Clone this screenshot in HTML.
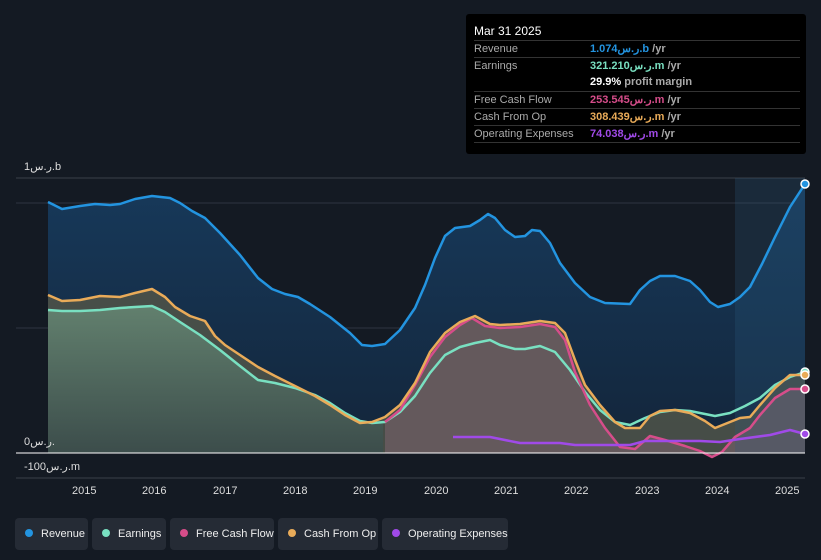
<!DOCTYPE html><html><head><style>
html,body{margin:0;width:821px;height:560px;overflow:hidden}
body{background:#141a23;font-family:"Liberation Sans","Noto Sans CJK SC",sans-serif;position:relative}
.tt{position:absolute;left:466px;top:14px;width:340px;height:140px;background:#000;border-radius:3px}
.tt .h{position:absolute;left:8px;top:10px;color:#fff;font-size:12px}
.row{position:absolute;left:8px;width:326px;border-top:1px solid #333;font-size:11px;color:#aaa;height:17px;line-height:17px;white-space:nowrap}
.row b{position:absolute;left:116px;font-weight:bold}
.ax{position:absolute;color:#ddd;font-size:11px;white-space:nowrap}
.lg{position:absolute;top:518px;height:32px;background:#252b35;border-radius:4px;color:#eee;font-size:11px;line-height:32px;white-space:nowrap;overflow:hidden}
.lg i{display:inline-block;width:8px;height:8px;border-radius:50%;margin:0 8px 0 10px}
</style></head><body>
<svg width="821" height="560" style="position:absolute;left:0;top:0">
<defs>
<linearGradient id="rv" x1="0" y1="0" x2="0" y2="1"><stop offset="0" stop-color="#17395a"/><stop offset="1" stop-color="#13253a"/></linearGradient>
<linearGradient id="er" x1="0" y1="0" x2="0" y2="1"><stop offset="0" stop-color="#62806e"/><stop offset="1" stop-color="#3c4d4b"/></linearGradient>
</defs>
<line x1="16" y1="178" x2="805" y2="178" stroke="#3a404a"/>
<line x1="16" y1="203" x2="805" y2="203" stroke="#2e3440"/>
<line x1="16" y1="328" x2="805" y2="328" stroke="#2e3440"/>
<line x1="16" y1="478" x2="805" y2="478" stroke="#3a404a"/>
<path fill="url(#rv)" d="M48,202L62,209L80,206L95,204L110,205L120,204L135,199L152,196L170,198L180,203L192,211L205,218L220,233L240,255L258,278L272,289L285,294L298,297L310,304L330,317L350,333L362,345L372,346L385,344L400,330L415,308L425,285L435,258L445,236L455,228L470,226L480,220L488,214L495,218L505,230L515,237L525,236L532,230L540,231L550,243L560,263L575,283L590,297L605,303L630,304L640,290L650,281L660,276L675,276L690,281L700,290L710,302L718,307L730,304L740,297L750,287L762,264L775,237L790,207L805,184L805,453L48,453Z"/>
<path fill="#4c5248" opacity="0.9" d="M48,295L62,301L80,300L100,296L120,297L135,293L152,289L165,297L175,307L190,316L205,321L215,336L225,345L240,355L258,367L275,376L295,386L315,396L330,405L345,415L360,423L372,422L385,417L400,405L415,383L430,352L445,333L460,322L475,316L490,324L500,325L520,324L540,321L555,323L565,333L575,360L585,385L600,405L615,422L625,428L640,428L650,416L660,411L675,410L690,413L705,421L715,428L725,424L740,418L750,417L760,405L775,388L790,375L805,375L805,453L48,453Z"/>
<path fill="url(#er)" d="M48,310L62,311L80,311L100,310L120,308L135,307L152,306L165,312L180,322L200,335L220,350L240,366L258,380L275,383L295,388L315,395L330,403L345,413L360,421L372,423L383,423L383,453L48,453Z"/>
<path fill="#6a5c60" opacity="0.85" d="M385,422L400,410L415,385L430,357L445,337L460,325L472,318L485,326L500,328L520,327L540,324L555,327L565,340L575,372L590,405L605,428L620,447L635,449L650,436L665,440L685,446L700,451L712,457L722,452L735,437L750,428L760,415L775,398L790,389L805,389L805,453L385,453Z"/>
<rect x="735" y="178" width="70" height="275" fill="#2a5a80" opacity="0.25"/>
<g fill="none" stroke-width="2.5" stroke-linejoin="round">
<path stroke="#79e0c1" d="M48,310L62,311L80,311L100,310L120,308L135,307L152,306L165,312L180,322L200,335L220,350L240,366L258,380L275,383L295,388L315,395L330,403L345,413L360,421L372,423L385,422L400,412L415,396L430,373L445,355L460,347L475,343L490,340L500,345L515,349L525,349L540,346L555,352L570,370L585,392L600,410L615,422L630,425L645,418L660,412L675,410L690,411L705,414L715,416L730,413L745,406L760,398L775,385L790,377L805,372"/>
<path stroke="#d64d8a" d="M385,422L400,410L415,385L430,357L445,337L460,325L472,318L485,326L500,328L520,327L540,324L555,327L565,340L575,372L590,405L605,428L620,447L635,449L650,436L665,440L685,446L700,451L712,457L722,452L735,437L750,428L760,415L775,398L790,389L805,389"/>
<path stroke="#e9ab59" d="M48,295L62,301L80,300L100,296L120,297L135,293L152,289L165,297L175,307L190,316L205,321L215,336L225,345L240,355L258,367L275,376L295,386L315,396L330,405L345,415L360,423L372,422L385,417L400,405L415,383L430,352L445,333L460,322L475,316L490,324L500,325L520,324L540,321L555,323L565,333L575,360L585,385L600,405L615,422L625,428L640,428L650,416L660,411L675,410L690,413L705,421L715,428L725,424L740,418L750,417L760,405L775,388L790,375L805,375"/>
<path stroke="#2394e0" d="M48,202L62,209L80,206L95,204L110,205L120,204L135,199L152,196L170,198L180,203L192,211L205,218L220,233L240,255L258,278L272,289L285,294L298,297L310,304L330,317L350,333L362,345L372,346L385,344L400,330L415,308L425,285L435,258L445,236L455,228L470,226L480,220L488,214L495,218L505,230L515,237L525,236L532,230L540,231L550,243L560,263L575,283L590,297L605,303L630,304L640,290L650,281L660,276L675,276L690,281L700,290L710,302L718,307L730,304L740,297L750,287L762,264L775,237L790,207L805,184"/>
<path stroke="#a04ae8" d="M453,437L490,437L520,443L560,443L575,445L630,445L645,441L700,441L720,442L740,439L770,435L790,430L805,434"/>
</g>
<line x1="16" y1="453" x2="805" y2="453" stroke="#fff" stroke-width="1"/>
<g stroke="#fff" stroke-width="1.5"><circle cx="805" cy="184" r="4" fill="#2394e0"/><circle cx="805" cy="372" r="4" fill="#79e0c1"/><circle cx="805" cy="375" r="4" fill="#e9ab59"/><circle cx="805" cy="389" r="4" fill="#d64d8a"/><circle cx="805" cy="434" r="4" fill="#a04ae8"/></g>
</svg>
<div class="ax" style="left:24px;top:160px">1ر.س.b</div>
<div class="ax" style="left:24px;top:435px">0ر.س.</div>
<div class="ax" style="left:24px;top:460px">-100ر.س.m</div>
<div class="ax" style="left:72px;top:485px">2015</div><div class="ax" style="left:142px;top:485px">2016</div><div class="ax" style="left:213px;top:485px">2017</div><div class="ax" style="left:283px;top:485px">2018</div><div class="ax" style="left:353px;top:485px">2019</div><div class="ax" style="left:424px;top:485px">2020</div><div class="ax" style="left:494px;top:485px">2021</div><div class="ax" style="left:564px;top:485px">2022</div><div class="ax" style="left:635px;top:485px">2023</div><div class="ax" style="left:705px;top:485px">2024</div><div class="ax" style="left:775px;top:485px">2025</div>
<div class="tt"><div class="h">Mar 31 2025</div>
<div class="row" style="top:26px">Revenue<b style="color:#2394e0">1.074ر.س.b <span style="color:#aaa">/yr</span></b></div>
<div class="row" style="top:43px">Earnings<b style="color:#79e0c1">321.210ر.س.m <span style="color:#aaa">/yr</span></b></div>
<div class="row" style="top:60px;border-top:none"><b style="color:#fff">29.9% <span style="color:#aaa">profit margin</span></b></div>
<div class="row" style="top:77px">Free Cash Flow<b style="color:#d64d8a">253.545ر.س.m <span style="color:#aaa">/yr</span></b></div>
<div class="row" style="top:94px">Cash From Op<b style="color:#e9ab59">308.439ر.س.m <span style="color:#aaa">/yr</span></b></div>
<div class="row" style="top:111px">Operating Expenses<b style="color:#a04ae8">74.038ر.س.m <span style="color:#aaa">/yr</span></b></div>
<div class="row" style="top:128px"></div></div>
<div class="lg" style="left:15px;width:73px"><i style="background:#2394e0"></i>Revenue</div>
<div class="lg" style="left:92px;width:74px"><i style="background:#79e0c1"></i>Earnings</div>
<div class="lg" style="left:170px;width:104px"><i style="background:#d64d8a"></i>Free Cash Flow</div>
<div class="lg" style="left:278px;width:100px"><i style="background:#e9ab59"></i>Cash From Op</div>
<div class="lg" style="left:382px;width:126px"><i style="background:#a04ae8"></i>Operating Expenses</div>
</body></html>
